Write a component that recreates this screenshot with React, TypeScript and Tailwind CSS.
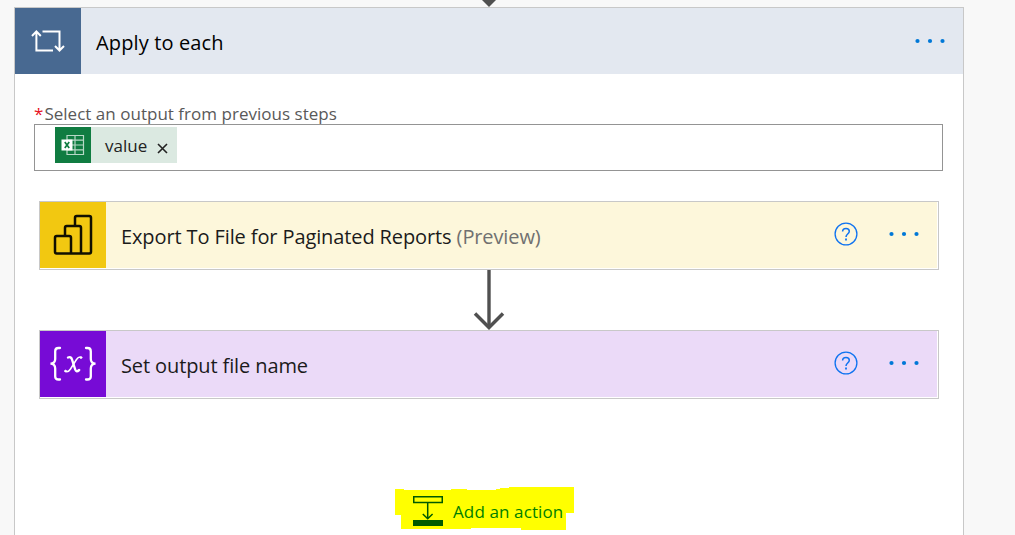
import type { ReactNode } from "react";

function Dots() {
  return (
    <svg width="32" height="6" viewBox="0 0 32 6" fill="#0078d7" aria-hidden="true">
      <circle cx="3.5" cy="3" r="2.1" />
      <circle cx="16" cy="3" r="2.1" />
      <circle cx="28.5" cy="3" r="2.1" />
    </svg>
  );
}

function HelpIcon() {
  return (
    <svg width="24" height="24" viewBox="0 0 24 24" fill="none" stroke="#0f73f0" aria-hidden="true">
      <circle cx="12" cy="12" r="10.9" strokeWidth="1.3" />
      <path d="M8.6 9.6c0-2 1.4-3.2 3.4-3.2s3.3 1.2 3.3 2.9c0 2.7-3.3 2.8-3.3 5.6" strokeWidth="1.5" />
      <path d="M12 16.6v1.8" strokeWidth="1.8" />
    </svg>
  );
}

function LoopIcon() {
  return (
    <svg width="34" height="24" viewBox="0 0 34 24" fill="none" stroke="#fff" strokeWidth="2" aria-hidden="true">
      <path d="M22 21.4H5.4V2.8M1 7l4.4-4.6L9.8 7" />
      <path d="M11.5 2.4h17v18.8M24 17l4.5 4.5L33 17" />
    </svg>
  );
}

function ExcelIcon() {
  return (
    <svg width="24" height="22" viewBox="0 0 24 22" fill="none" aria-hidden="true">
      <path d="M6 1.5h16.5v19H6zM6 6.2h16.5M6 11h16.5M6 15.8h16.5M14 1.5v19" stroke="#b7d8c6" strokeWidth="1.2" />
      <rect x="0.5" y="5.5" width="11" height="11" fill="#fff" />
      <path d="M3.8 8l4.4 6M8.2 8l-4.4 6" stroke="#107c41" strokeWidth="1.7" />
    </svg>
  );
}

function PowerBiIcon() {
  return (
    <svg width="40" height="42" viewBox="0 0 40 42" fill="none" stroke="#111000" strokeWidth="2.5" aria-hidden="true">
      <path d="M22 11.5V3.7Q22 2 23.7 2H36.3Q38 2 38 3.7V37.8Q38 39.5 36.3 39.5H3.7Q2 39.5 2 37.8V23.7Q2 22 3.7 22H16.3Q18 22 18 23.7V39.5" />
      <path d="M12 22V13.7Q12 12 13.7 12H26.3Q28 12 28 13.7V39.5" />
    </svg>
  );
}

function VariableIcon() {
  return (
    <svg width="48" height="36" viewBox="0 0 48 36" fill="none" stroke="#fff" strokeLinecap="round" aria-hidden="true">
      <path d="M11 2H9.5Q6.2 2 6.2 5.2V13Q6.2 17.4 1.5 17.7Q6.2 18 6.2 22.5V30.5Q6.2 33.5 9.5 33.5H11" strokeWidth="2.3" />
      <path d="M37 2h1.5Q41.8 2 41.8 5.2V13Q41.8 17.4 46.5 17.7Q41.8 18 41.8 22.5V30.5Q41.8 33.5 38.5 33.5H37" strokeWidth="2.3" />
      <path d="M19 11.5Q22 10.2 23 13.5L26.2 23.5Q27.2 26.7 30.2 24" strokeWidth="2.4" />
      <path d="M32.5 11.3Q29.7 10.1 27.5 13.5L21.5 23Q19 27 16 25.2" strokeWidth="1.5" />
      <circle cx="32" cy="11.7" r=".8" fill="#fff" />
      <circle cx="16.5" cy="25" r=".8" fill="#fff" />
    </svg>
  );
}

function AddActionIcon() {
  return (
    <svg width="30" height="30" viewBox="0 0 30 30" fill="none" stroke="#005a00" aria-hidden="true">
      <rect x="0.75" y="0.75" width="28.5" height="5.75" strokeWidth="1.5" />
      <path d="M14.7 7v15.500M9.800 18l4.900 4.700 4.900-4.700" strokeWidth="1.500" />
      <path d="M0 27h30" strokeWidth="6" />
    </svg>
  );
}

function ActionCard({ icon, iconClass, bodyClass, children }: {
  icon: ReactNode;
  iconClass: string;
  bodyClass: string;
  children: ReactNode;
}) {
  return (
    <section className="flex h-[69px] w-[900px] border border-[#c8c8c8] bg-white pr-px pb-px">
      <div className={`flex w-[66px] shrink-0 items-center justify-center ${iconClass}`}>{icon}</div>
      <div className={`flex grow items-center pr-[17px] pb-0.5 pl-[15px] ${bodyClass}`}>
        <h2 className="grow pt-[5px] text-[20px] leading-7 tracking-[-0.11px] whitespace-nowrap text-[#1b1b1b]">{children}</h2>
        <HelpIcon />
        <span className="ml-[30px]"><Dots /></span>
      </div>
    </section>
  );
}

export default function App() {
  return (
    <main className="flex h-[535px] w-[1015px] flex-col overflow-hidden bg-[#f8f8f8] pl-[14px] font-['Open_Sans',sans-serif]">
      <div className="flex h-[7px] w-[950px] shrink-0 justify-center">
        <svg width="16" height="7" viewBox="0 0 16 7" aria-hidden="true"><path d="M1 0h14L8 7z" fill="#505050" /></svg>
      </div>
      <div className="flex h-[560px] w-[950px] shrink-0 flex-col border border-[#c8c8c8] bg-white">
        <header className="flex h-[66px] shrink-0 bg-[#e3e8f0]">
          <div className="flex w-[66px] items-center justify-center bg-[#486991]"><LoopIcon /></div>
          <div className="flex grow items-center justify-between pr-[17px] pl-[15px]">
            <h1 className="pt-[3px] text-[20px] leading-7 tracking-[0.14px] text-black">Apply to each</h1>
            <Dots />
          </div>
        </header>
        <div className="flex flex-col pt-[29px] pl-[19px]">
          <label className="flex h-[21px] gap-px text-[17px] leading-[22px] whitespace-nowrap text-[#595959]">
            <span className="text-[#e81123]">*</span>
            <span className="tracking-[0.02px]">Select an output from previous steps</span>
          </label>
          <div className="flex h-[47px] w-[909px] border border-[#949494] bg-white pt-[2px] pl-[20px]">
            <div className="flex h-9 w-[122px] bg-[#dbe9e1]">
              <span className="flex w-9 items-center justify-center bg-[#107c41]"><ExcelIcon /></span>
              <span className="ml-[14px] text-[17px] leading-[37px] text-[#222]">value</span>
              <svg className="mt-[16px] ml-[10px]" width="11" height="11" viewBox="0 0 11 11" stroke="#222" strokeWidth="1.6" aria-hidden="true">
                <path d="M1 1l9 9M10 1l-9 9" />
              </svg>
            </div>
          </div>
          <div className="mt-[30px] ml-[5px] flex w-[900px] flex-col items-center">
            <ActionCard icon={<PowerBiIcon />} iconClass="bg-[#f2c811]" bodyClass="bg-[#fdf7db]">
              Export To File for Paginated Reports <span className="text-[#707070]">(Preview)</span>
            </ActionCard>
            <svg width="32" height="60" viewBox="0 0 32 60" fill="none" stroke="#505050" aria-hidden="true">
              <path d="M16 0v57" strokeWidth="3.4" />
              <path d="M2 43.5l14 14 14-14" strokeWidth="3.5" />
            </svg>
            <ActionCard icon={<VariableIcon />} iconClass="bg-[#770bd6]" bodyClass="bg-[#ebdaf8]">Set output file name</ActionCard>
          </div>
          <div className="mt-[88px] ml-[361px] h-[43px] w-[179px] bg-[#ffff00] [clip-path:polygon(0_2px,9px_2px,9px_3px,56px_3px,56px_2px,72px_2px,72px_3px,101px_3px,101px_2px,105px_2px,105px_1px,114px_1px,114px_0,179px_0,179px_26px,171px_26px,171px_44px,153px_44px,153px_43px,126px_43px,126px_41px,76px_41px,76px_42px,6px_42px,6px_28px,0_28px)]">
            <button className="flex pt-[9px] pl-[18px] text-[#008000]">
              <AddActionIcon />
              <span className="ml-[10px] text-[17px] leading-[31px] tracking-[0.12px] whitespace-nowrap">Add an action</span>
            </button>
          </div>
        </div>
      </div>
    </main>
  );
}
